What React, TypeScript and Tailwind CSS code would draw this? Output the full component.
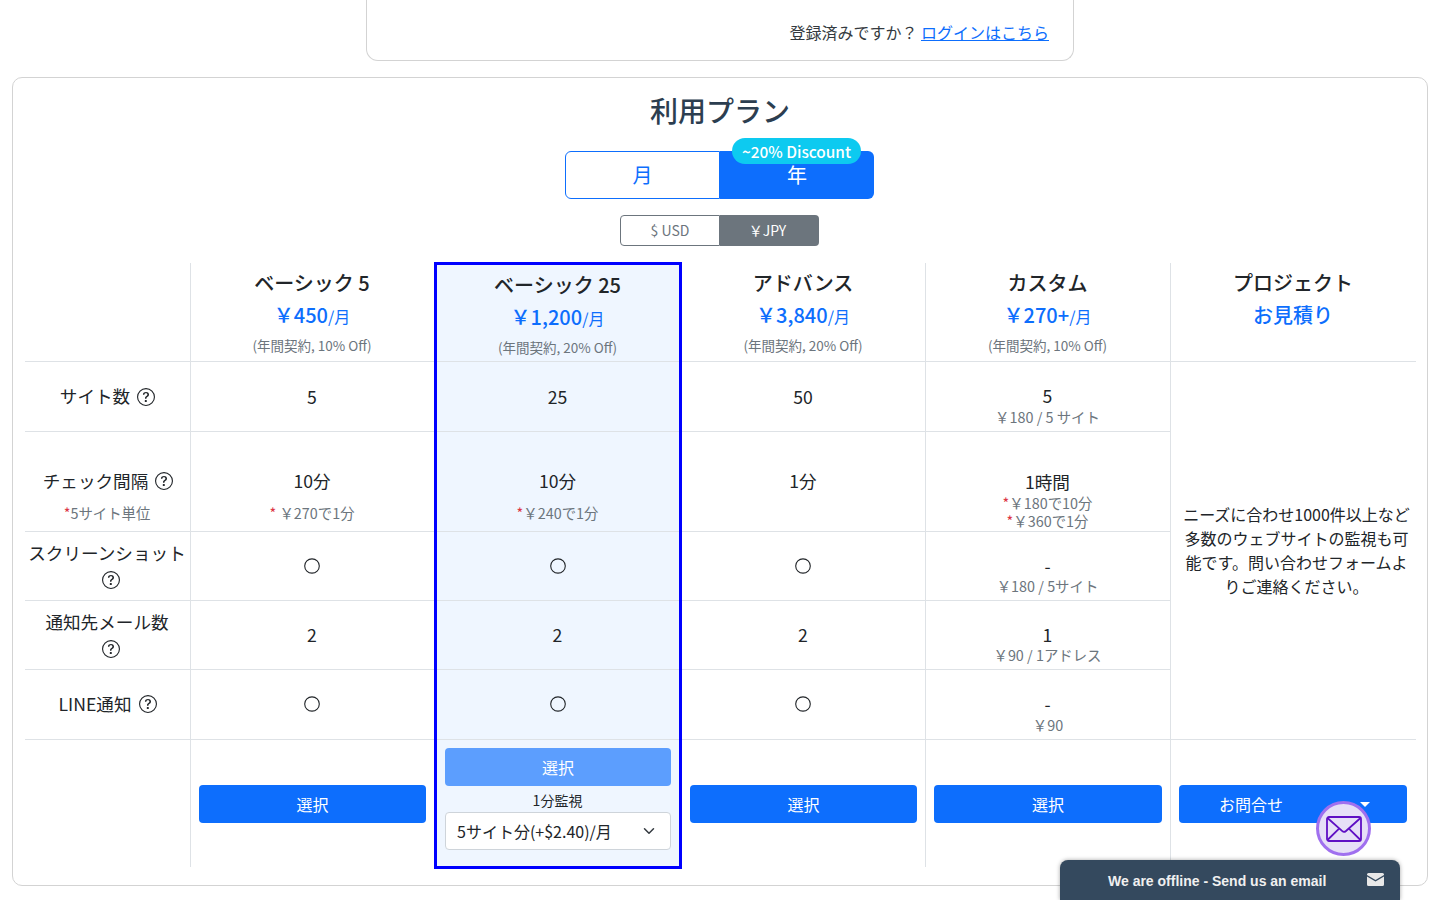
import React from "react";

const Q = () => (
  <svg viewBox="0 0 16 16" className="w-[18px] h-[18px] inline-block shrink-0" fill="#212529">
    <path d="M8 15A7 7 0 1 1 8 1a7 7 0 0 1 0 14zm0 1A8 8 0 1 0 8 0a8 8 0 0 0 0 16z" />
    <path d="M5.255 5.786a.237.237 0 0 0 .241.247h.825c.138 0 .248-.113.266-.25.09-.656.54-1.134 1.342-1.134.686 0 1.314.343 1.314 1.168 0 .635-.374.927-.965 1.371-.673.489-1.206 1.06-1.168 1.987l.003.217a.25.25 0 0 0 .25.246h.811a.25.25 0 0 0 .25-.25v-.105c0-.718.273-.927 1.01-1.486.609-.463 1.244-.977 1.244-2.056 0-1.511-1.276-2.241-2.673-2.241-1.267 0-2.655.59-2.75 2.286zm1.557 5.763c0 .533.425.927 1.01.927.609 0 1.028-.394 1.028-.927 0-.552-.42-.94-1.029-.94-.584 0-1.009.388-1.009.94z" />
  </svg>
);

const Ring = () => (
  <svg viewBox="0 0 16 16" className="w-4 h-4" fill="none" stroke="#212529" strokeWidth="1.1">
    <ellipse cx="8" cy="8" rx="7.3" ry="7.1" />
  </svg>
);

const Sub = ({ children }: { children: React.ReactNode }) => (
  <div className="text-[14.4px] leading-[21px] text-[#6c757d]">{children}</div>
);

const Small = ({ children }: { children: React.ReactNode }) => (
  <div className="text-[14.4px] leading-[18px] text-[#6c757d]">{children}</div>
);

const Cell = ({ h, pt, children }: { h: string; pt: string; children?: React.ReactNode }) => (
  <div className={`${h} ${pt} border-b border-[#dee2e6] flex flex-col items-center text-center text-[17.6px] pl-1 pr-[5px] shrink-0`}>
    {children}
  </div>
);

const Head = ({ name, price, per, note }: { name: string; price: string; per?: string; note?: string }) => (
  <div className="h-[99px] pt-[5px] pr-px border-b border-[#dee2e6] flex flex-col items-center shrink-0">
    <div className="text-xl leading-[30px] font-medium text-[#212529]">{name}</div>
    <div className="mt-[2px] text-xl leading-[30px] font-medium text-[#0d6efd]">
      {price}
      {per && <span className="text-base font-normal">{per}</span>}
    </div>
    {note && <div className="mt-[5px] text-[13.5px] leading-[21px] text-[#6c757d]">{note}</div>}
  </div>
);

const Btn = ({ label }: { label: string }) => (
  <button className="w-full h-[38px] rounded bg-[#0d6efd] text-white text-base">{label}</button>
);

const Foot = ({ children }: { children: React.ReactNode }) => (
  <div className="h-[127px] px-2 pt-[45px]">{children}</div>
);

const Rows = ({ rows }: { rows: React.ReactNode[] }) => (
  <>
    <Cell h="h-[70px]" pt="pt-[23px]">{rows[0]}</Cell>
    <Cell h="h-[100px]" pt="pt-[37px]">{rows[1]}</Cell>
    <Cell h="h-[69px]" pt="pt-[26px]"><Ring /></Cell>
    <Cell h="h-[69px]" pt="pt-[22px]">{rows[3]}</Cell>
    <Cell h="h-[70px]" pt="pt-[26px]"><Ring /></Cell>
  </>
);

const Mail = () => (
  <svg viewBox="0 0 36 26" className="w-[36px] h-[26px]" fill="none" stroke="#5f0fc4" strokeWidth="1.8" strokeLinejoin="round">
    <rect x="1" y="1" width="34" height="24" rx="2" />
    <path d="M1.5 2l14.8 13.2a2.6 2.6 0 0 0 3.4 0L34.5 2" />
    <path d="M1.5 24l11.6-11.4M34.5 24L22.9 12.6" />
  </svg>
);

export default function App() {
  return (
    <div className="relative h-[900px] overflow-hidden bg-white font-['Noto_Sans_CJK_JP','Noto_Sans',sans-serif] text-base text-[#212529]">
      {/* upper card */}
      <div className="mx-auto w-[708px] h-[61px] border border-t-0 border-[#d3d3d3] rounded-b-[12px] flex justify-end items-start pt-5 pr-6 text-[#343a40]">
        <span className="leading-6">登録済みですか？ <a className="text-[#0d6efd] underline">ログインはこちら</a></span>
      </div>

      {/* plan card */}
      <div className="mx-3 mt-4 h-[809px] border border-[#d3d3d3] rounded-[10px] px-3">
        <h3 className="mt-3 text-center text-[28px] leading-[40px] font-medium text-[#2c3e50]">利用プラン</h3>

        <div className="mt-[21px] flex justify-center pr-px">
          <div className="relative flex w-[309px] h-12 text-xl">
            <div className="w-[155px] flex items-center justify-center border border-[#0d6efd] rounded-l-md text-[#0d6efd] bg-white">月</div>
            <div className="flex-1 flex items-center justify-center rounded-r-md bg-[#0d6efd] text-white">年</div>
            <span className="absolute left-[167px] -top-[13px] w-[129px] h-[26px] rounded-full bg-[#0dcaf0] text-white text-[15.4px] font-medium leading-[26px] text-center">~20% Discount</span>
          </div>
        </div>

        <div className="mt-4 flex justify-center pr-px">
          <div className="flex w-[199px] h-[31px] text-sm">
            <div className="w-[100px] pb-px flex items-center justify-center border border-[#6c757d] rounded-l text-[#6c757d]">$ USD</div>
            <div className="flex-1 pb-[2px] pr-1 flex items-center justify-center rounded-r bg-[#6c757d] text-white">￥JPY</div>
          </div>
        </div>

        {/* table */}
        <div className="mt-[17px] flex items-start">
          {/* labels */}
          <div className="w-[166px] shrink-0 border-r border-[#dee2e6]">
            <div className="h-[99px] border-b border-[#dee2e6]" />
            <Cell h="h-[70px]" pt="pt-[22px]">
              <div className="flex items-center gap-[7px] pl-px leading-6">サイト数 <span className="flex mt-[2px]"><Q /></span></div>
            </Cell>
            <Cell h="h-[100px]" pt="pt-[37px]">
              <div className="flex items-center gap-[7px] pl-[2px] leading-6">チェック間隔 <Q /></div>
              <div className="mt-[9px]"><Sub><span className="text-[#dc3545]">*</span>5サイト単位</Sub></div>
            </Cell>
            <Cell h="h-[69px]" pt="pt-[9px]">
              <div className="leading-6 whitespace-nowrap">スクリーンショット</div>
              <div className="mt-[6px] ml-2 flex"><Q /></div>
            </Cell>
            <Cell h="h-[69px]" pt="pt-[9px]">
              <div className="leading-6">通知先メール数</div>
              <div className="mt-[6px] ml-2 flex"><Q /></div>
            </Cell>
            <Cell h="h-[70px]" pt="pt-[22px]">
              <div className="flex items-center gap-2 pl-[2px] leading-6">LINE通知 <Q /></div>
            </Cell>
            <div className="h-[127px]" />
          </div>

          {/* basic 5 */}
          <div className="w-[243px] shrink-0">
            <Head name="ベーシック 5" price="￥450" per="/月" note="(年間契約, 10% Off)" />
            <Rows
              rows={[
                <div className="leading-6">5</div>,
                <>
                  <div className="leading-6">10分</div>
                  <div className="mt-[9px]"><Sub><span className="text-[#dc3545]">*</span>&nbsp;￥270で1分</Sub></div>
                </>,
                null,
                <div className="leading-6">2</div>,
              ]}
            />
            <Foot><Btn label="選択" /></Foot>
          </div>

          {/* basic 25 (highlighted) */}
          <div className="w-[248px] shrink-0 -mt-px border-[3px] border-[#0000ff] bg-[#eff6ff]">
            <div className="h-[97px] pr-px border-b border-[#dee2e6] flex flex-col items-center pt-[5px]">
              <div className="text-xl leading-[30px] font-medium">ベーシック 25</div>
              <div className="mt-[2px] text-xl leading-[30px] font-medium text-[#0d6efd]">
                ￥1,200<span className="text-base font-normal">/月</span>
              </div>
              <div className="mt-[5px] text-[13.5px] leading-[21px] text-[#6c757d]">(年間契約, 20% Off)</div>
            </div>
            <Rows
              rows={[
                <div className="leading-6">25</div>,
                <>
                  <div className="leading-6">10分</div>
                  <div className="mt-[9px]"><Sub><span className="text-[#dc3545]">*</span>￥240で1分</Sub></div>
                </>,
                null,
                <div className="leading-6">2</div>,
              ]}
            />
            <div className="h-[126px] px-2 pt-2">
              <button className="w-full h-[38px] rounded bg-[#0d6efd]/65 text-white text-base">選択</button>
              <div className="mt-[4px] text-center text-sm leading-[21px] pr-px">1分監視</div>
              <div className="mt-px h-[38px] rounded border border-[#ced4da] bg-white flex items-center justify-between pl-[11px] pr-[15px] text-[#212529]">
                <span>5サイト分(+$2.40)/月</span>
                <svg viewBox="0 0 16 16" className="w-3 h-3" fill="none" stroke="#343a40" strokeWidth="2" strokeLinecap="round" strokeLinejoin="round">
                  <path d="M2 5l6 6 6-6" />
                </svg>
              </div>
            </div>
          </div>

          {/* advance */}
          <div className="w-[244px] shrink-0 border-r border-[#dee2e6]">
            <Head name="アドバンス" price="￥3,840" per="/月" note="(年間契約, 20% Off)" />
            <Rows
              rows={[
                <div className="leading-6">50</div>,
                <div className="leading-6">1分</div>,
                null,
                <div className="leading-6">2</div>,
              ]}
            />
            <Foot><Btn label="選択" /></Foot>
          </div>

          {/* custom */}
          <div className="w-[245px] shrink-0 border-r border-[#dee2e6]">
            <Head name="カスタム" price="￥270+" per="/月" note="(年間契約, 10% Off)" />
            <Cell h="h-[70px]" pt="pt-[23px]">
              <div className="leading-[22px]">5</div>
              <div className="mt-px"><Small>￥180 / 5 サイト</Small></div>
            </Cell>
            <Cell h="h-[100px]" pt="pt-[38px]">
              <div className="leading-6">1時間</div>
              <div className="text-[14.4px] leading-[17px] text-[#6c757d]"><span className="text-[#dc3545]">*</span>￥180で10分</div>
              <div className="mt-px text-[14.4px] leading-[17px] text-[#6c757d]"><span className="text-[#dc3545]">*</span>￥360で1分</div>
            </Cell>
            <Cell h="h-[69px]" pt="pt-[23px]">
              <div className="leading-[22px]">-</div>
              <Small>￥180 / 5サイト</Small>
            </Cell>
            <Cell h="h-[69px]" pt="pt-[23px]">
              <div className="leading-[22px]">1</div>
              <Small>￥90 / 1アドレス</Small>
            </Cell>
            <Cell h="h-[70px]" pt="pt-[23px]">
              <div className="leading-[22px]">-</div>
              <div className="mt-px pl-px"><Small>￥90</Small></div>
            </Cell>
            <Foot><Btn label="選択" /></Foot>
          </div>

          {/* project */}
          <div className="w-[245px] shrink-0">
            <div className="h-[99px] pt-[5px] pr-px border-b border-[#dee2e6] flex flex-col items-center">
              <div className="text-xl leading-[30px] font-medium">プロジェクト</div>
              <div className="mt-[2px] text-xl leading-[30px] font-medium text-[#0d6efd]">お見積り</div>
            </div>
            <div className="h-[378px] pb-[2px] border-b border-[#dee2e6] flex items-center justify-center pl-[11px] pr-[5px] text-center leading-6">
              <p>ニーズに合わせ1000件以上など多数のウェブサイトの監視も可能です。問い合わせフォームよりご連絡ください。</p>
            </div>
            <div className="h-[127px] pl-2 pr-[9px] pt-[45px]">
              <button className="w-full h-[38px] rounded bg-[#0d6efd] text-white text-base flex items-center justify-between pl-10 pr-[37px]">
                <span>お問合せ</span>
                <span className="w-0 h-0 border-x-[5px] border-x-transparent border-t-[5px] border-t-white" />
              </button>
            </div>
          </div>
        </div>
      </div>

      {/* chat widget */}
      <div className="absolute left-[1316px] top-[801px] w-[55px] h-[55px] rounded-full border-[3px] border-[#a070ef] bg-[#e6dff7] flex items-center justify-center">
        <Mail />
      </div>
      <div className="absolute left-[1060px] top-[860px] w-[340px] h-10 pt-[2px] rounded-t-lg bg-[#34495e] shadow-[0_0_4px_rgba(0,0,0,0.35)] flex items-center font-['Liberation_Sans',sans-serif]">
        <span className="ml-12 text-sm font-bold text-[#f0f0f0]">We are offline - Send us an email</span>
        <svg viewBox="0 0 17 13" className="absolute left-[307px] top-[13px] w-[17px] h-[13px]" fill="#e8e8e8">
          <path d="M1.5 0h14A1.5 1.5 0 0 1 17 1.5v.6L8.5 7 0 2.1v-.6A1.5 1.5 0 0 1 1.5 0z" />
          <path d="M0 3.6l8.5 4.9L17 3.6v7.9a1.5 1.5 0 0 1-1.5 1.5h-14A1.5 1.5 0 0 1 0 11.5z" />
        </svg>
      </div>
    </div>
  );
}
